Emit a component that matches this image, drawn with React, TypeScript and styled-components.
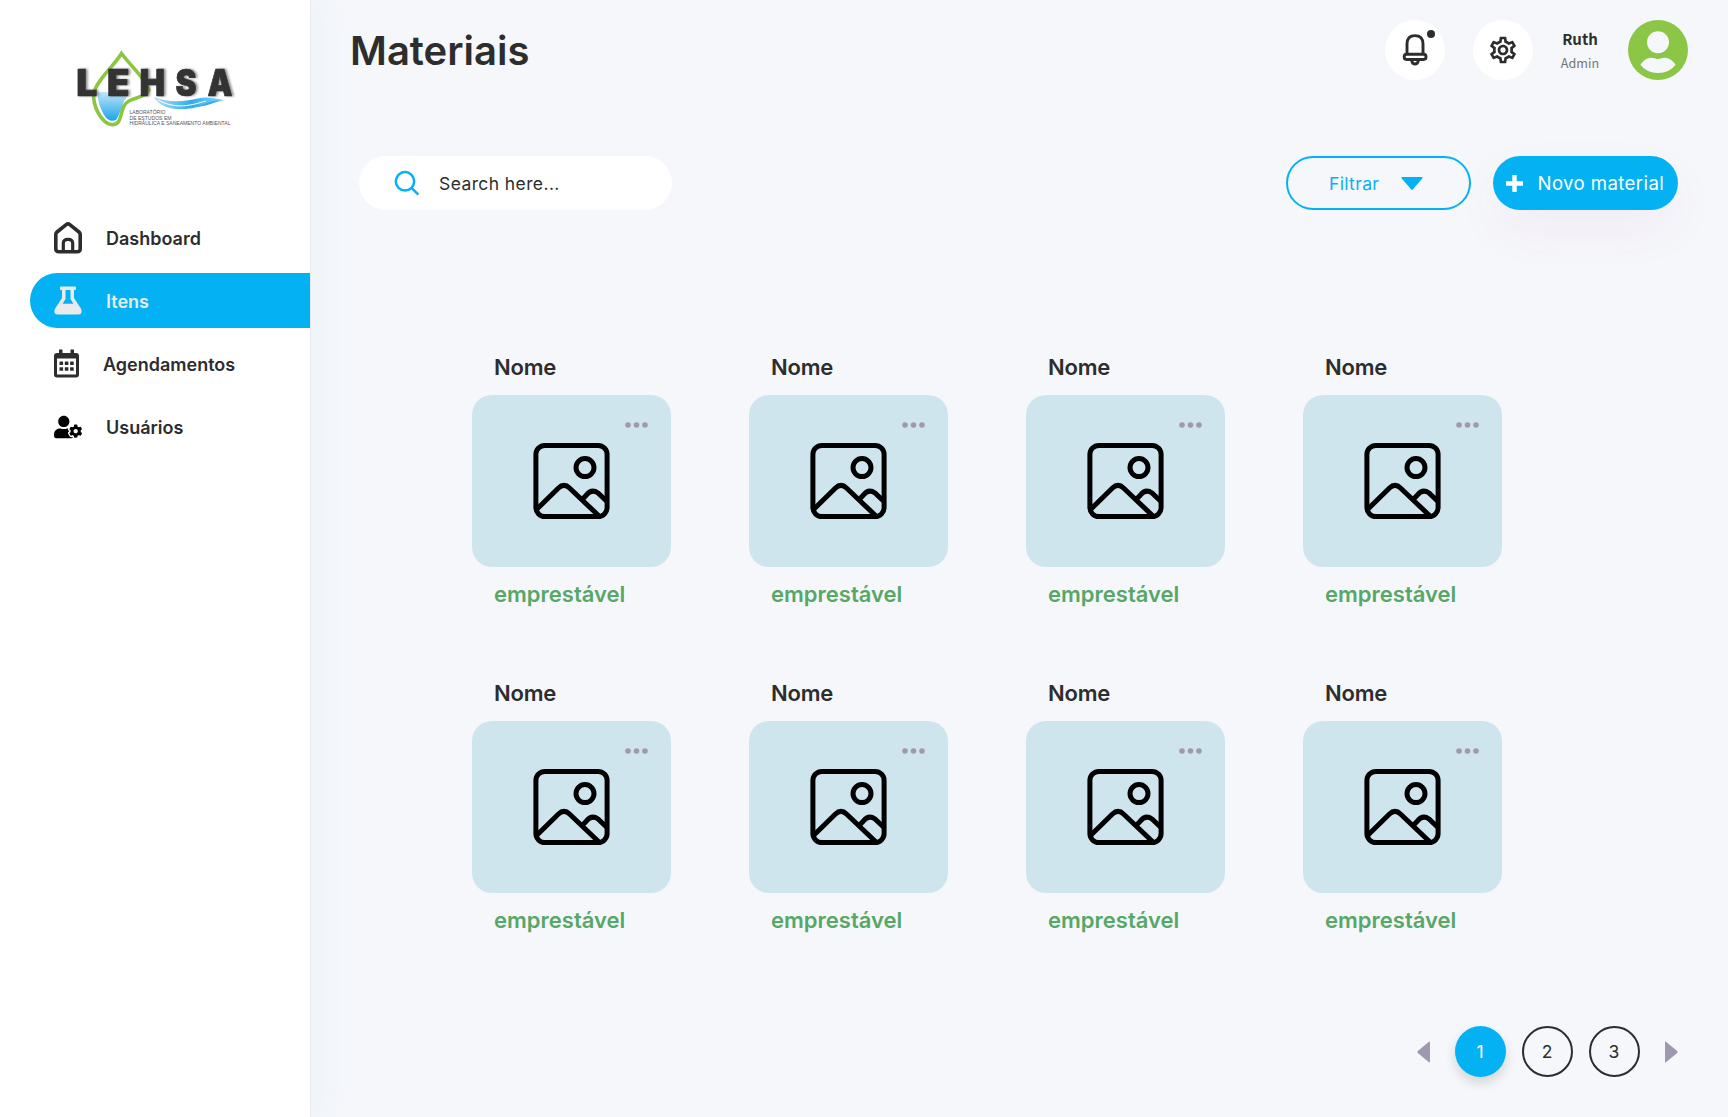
import React from "react";
import styled, { createGlobalStyle, css } from "styled-components";
import { FaUserCog } from "react-icons/fa";
import { MdOutlineSettings } from "react-icons/md";

const blue = "#04b2f3";
const ink = "#2d2d2e";
const mauve = "#a098ae";

const GlobalStyle = createGlobalStyle`
  *, *::before, *::after { box-sizing: border-box; }
  body { margin: 0; background: #f5f7fb; font-family: Inter, "Liberation Sans", sans-serif; color: ${ink}; }
  button { font: inherit; color: inherit; background: none; border: 0; padding: 0; }
  svg { display: block; flex: none; overflow: visible; }
`;

const Shell = styled.div`
  display: flex;
  width: 1728px;
  height: 1117px;
  overflow: hidden;
`;

const Sidebar = styled.aside`
  width: 310px;
  flex: none;
  background: #fff;
  padding: 40px 0 0;
  box-shadow: 1px 0 0 #e6ebf1, 10px 0 30px rgba(225, 238, 246, 0.4);
`;

const LogoBox = styled.div`
  height: 100px;
  padding-left: 60px;
  margin-bottom: 70px;
`;

const Nav = styled.nav`
  display: flex;
  flex-direction: column;
  gap: 8px;
  padding-left: 30px;
`;

const NavItem = styled.a<{ $active?: boolean }>`
  display: flex;
  align-items: center;
  gap: 24px;
  height: 55px;
  padding: 2px 0 0 24px;
  border-radius: 28px 0 0 28px;
  font-size: 18px;
  font-weight: 600;
  color: ${(p) => (p.$active ? "#e9eaec" : ink)};
  background: ${(p) => (p.$active ? blue : "transparent")};

  svg {
    margin-bottom: 2px;
  }
`;

const Main = styled.main`
  flex: 1;
  display: flex;
  flex-direction: column;
`;

const Header = styled.header`
  display: flex;
  justify-content: space-between;
  align-items: center;
  height: 100px;
  padding: 0 40px 0 40px;
`;

const Title = styled.h1`
  margin: 2px 0 0;
  font-size: 40px;
  line-height: 48px;
  font-weight: 600;
`;

const HeaderTools = styled.div`
  display: flex;
  align-items: center;
`;

const RoundButton = styled.button`
  width: 60px;
  height: 60px;
  margin-right: 28px;
  border-radius: 50%;
  background: #fff;
  display: grid;
  place-items: center;
`;

const Person = styled.div`
  width: 38px;
  margin: 1px 29px 0 0;
  display: flex;
  flex-direction: column;
  align-items: center;
  font-family: "Noto Sans CJK JP", "Noto Sans", sans-serif;
  line-height: 24px;
`;

const PersonName = styled.span`
  font-size: 15px;
  font-weight: 700;
`;

const PersonRole = styled.span`
  font-size: 12.6px;
  color: #757575;
`;

const Toolbar = styled.div`
  display: flex;
  align-items: center;
  margin-top: 56px;
  padding: 0 50px 0 49px;
  height: 54px;
`;

const geometric = css`
  font-family: Inter, "Liberation Sans", sans-serif;
  font-weight: 400;
  font-size: 17.5px;
  white-space: nowrap;
`;

const Search = styled.div`
  display: flex;
  align-items: center;
  gap: 19px;
  width: 313px;
  height: 54px;
  padding-left: 35px;
  border-radius: 27px;
  background: #fff;
  margin-right: auto;
`;

const Label = styled.span<{ $track?: number; $size?: number }>`
  ${geometric}
  font-size: ${(p) => p.$size ?? 17.5}px;
  letter-spacing: ${(p) => p.$track ?? 0}px;
`;

const FilterButton = styled.button`
  display: flex;
  align-items: center;
  gap: 22px;
  width: 185px;
  height: 54px;
  padding-left: 41px;
  border: 2px solid ${blue};
  border-radius: 27px;
  color: ${blue};
  margin-right: 22px;
`;

const NewButton = styled.button`
  display: flex;
  align-items: center;
  gap: 15px;
  width: 185px;
  height: 54px;
  padding-left: 12.5px;
  border-radius: 27px;
  color: #fff;
  background: ${blue};
  box-shadow: 0 20px 50px rgba(191, 21, 108, 0.05);
`;

const Grid = styled.section`
  display: grid;
  grid-template-columns: repeat(4, 199px);
  column-gap: 78px;
  row-gap: 46px;
  margin: 140px 0 0 162px;
`;

const Card = styled.article`
  height: 280px;
  display: flex;
  flex-direction: column;
`;

const CardName = styled.h2`
  margin: 0 0 11px 22px;
  height: 34px;
  line-height: 34px;
  font-size: 22px;
  font-weight: 600;
  letter-spacing: -0.2px;
`;

const Thumb = styled.div`
  position: relative;
  height: 172px;
  border-radius: 20px;
  background: #cfe5ed;
  display: grid;
  place-items: center;
`;

const More = styled.button`
  position: absolute;
  top: 27px;
  right: 22.5px;
`;

const Status = styled.span`
  margin: 10px 0 0 22px;
  line-height: 34px;
  font-size: 22px;
  font-weight: 600;
  color: #57a767;
`;

const Pagination = styled.nav`
  display: flex;
  align-items: center;
  justify-content: flex-end;
  margin-top: 70px;
  padding-right: 50px;
  height: 51px;
`;

const Page = styled.button<{ $active?: boolean }>`
  width: 51px;
  height: 51px;
  margin-right: 16px;
  border-radius: 50%;
  ${geometric}
  ${(p) =>
    p.$active
      ? css`
          background: ${blue};
          color: #fff;
          box-shadow: 0 6px 12px rgba(0, 0, 0, 0.14);
        `
      : css`
          border: 2px solid ${ink};
        `}
`;

const LogoLetter = styled.text`
  font-family: Inter, "Liberation Sans", sans-serif;
  font-weight: 900;
  font-size: 36.5px;
  fill: #333334;
  stroke: #333334;
  stroke-width: 0.7px;
`;

const LogoWord = styled.g`
  filter: drop-shadow(2.5px 0.5px 0.8px rgba(60, 60, 60, 0.55));
`;

const letters: [string, number, number][] = [
  ["L", 16.3, 21],
  ["E", 47, 22.5],
  ["H", 79.6, 25.5],
  ["S", 115.5, 21],
  ["A", 147.5, 25],
];

const Logo = () => (
  <svg width="190" height="100" viewBox="0 0 190 100">
    <defs>
      <linearGradient id="water" x1="0" y1="0" x2="0" y2="1">
        <stop offset="0" stopColor="#c3e6f8" />
        <stop offset="1" stopColor="#1ba5ea" />
      </linearGradient>
      <linearGradient id="wave" x1="0" y1="0" x2="1" y2="0">
        <stop offset="0" stopColor="#b5e0f7" />
        <stop offset="0.5" stopColor="#2fadea" />
        <stop offset="1" stopColor="#9fd8f5" />
      </linearGradient>
    </defs>
    <path d="M37.5 53 Q44 50 51 54 T66 52 Q69 56 64 61 Q60 74 56 80 Q49 83 44 75 Q38 65 37.5 53Z" fill="url(#water)" />
    <path d="M61.5 13.5 C54 26 36 41 34 53 C32 66 42 83 51 84.5 C61 86 60 75 63.500 67 C68 56 84 60 89 50 C85 38 70 25 61.5 13.5Z" fill="none" stroke="#8cc640" strokeWidth="3.6" />
    <path d="M94 57 C112 64 126 61 140 58 C150 56 160 60 168 60 C150 60 142 69 123 69 C109 70 98 65 94 57Z" fill="url(#wave)" />
    <path d="M98 60 C116 70 132 65 146 61" fill="none" stroke="#fff" strokeWidth="1" />
    <path d="M135 66.5 C147 65 151 59 163 61 C154 61 149 67 135 66.5Z" fill="#2fadea" />
    <LogoWord>
      {letters.map(([char, x, width]) => (
        <LogoLetter key={char} x={x} y="55.6" textLength={width} lengthAdjust="spacingAndGlyphs">
          {char}
        </LogoLetter>
      ))}
    </LogoWord>
    <g fontFamily="Liberation Sans" fontSize="4.8" fill="#555">
      <text x="69.5" y="74" textLength="36" lengthAdjust="spacingAndGlyphs">LABORATÓRIO</text>
      <text x="69.5" y="79.5" textLength="42" lengthAdjust="spacingAndGlyphs">DE ESTUDOS EM</text>
      <text x="69.5" y="85.1" textLength="101" lengthAdjust="spacingAndGlyphs">HIDRÁULICA E SANEAMENTO AMBIENTAL</text>
    </g>
  </svg>
);

const HomeIcon = () => (
  <svg width="28" height="32" viewBox="0 0 28 32" fill="none" stroke={ink} strokeWidth="3.6" strokeLinejoin="round">
    <path d="M1.8 12.5 Q1.8 11 3 10 L12.2 2.6 Q14 1.2 15.8 2.6 L25 10 Q26.2 11 26.2 12.5 V26.7 Q26.2 29.7 23.2 29.7 H4.8 Q1.8 29.7 1.8 26.7Z" />
    <path d="M9.3 29 V21.3 Q9.3 17.3 14 17.3 Q18.7 17.3 18.7 21.3 V29" strokeWidth="3.2" />
  </svg>
);

const FlaskIcon = () => (
  <svg width="28" height="29" viewBox="0 0 28 29" fill="#e9eaec" fillRule="evenodd">
    <path d="M7 0.5 H21 Q22 0.5 22 1.5 V3 Q22 4 21 4 H20 V12 L27.2 23 Q29 28.5 24 28.5 H4 Q-1 28.5 .8 23 L8 12 V4 H7 Q6 4 6 3 V1.5 Q6 .5 7 .5Z M11.5 4 V13 L8.6 17.7 H19.4 L16.5 13 V4Z" />
  </svg>
);

const CalendarIcon = () => (
  <svg width="25" height="29" viewBox="0 0 25 29" fill={ink} fillRule="evenodd">
    <path d="M5 0.5 H8.5 V4 H16.5 V0.5 H20 V4 H22 Q25 4 25 7 V25.5 Q25 28.5 22 28.5 H3 Q0 28.5 0 25.5 V7 Q0 4 3 4 H5Z M3 9.5 V25.5 H22 V9.5Z" />
    {[5.5, 10.8, 16.1].map((x) =>
      [12.5, 18.2].map((y) => <rect key={`${x}-${y}`} x={x} y={y} width="3.6" height="3.6" rx="0.5" />)
    )}
  </svg>
);

const BellIcon = () => (
  <svg width="60" height="60" viewBox="0 0 60 60" fill="none" stroke={ink} strokeWidth="2.9">
    <path d="M22 34.5 V24 Q22 15.6 30 15.6 Q38 15.6 38 24 V34.5" />
    <rect x="19.2" y="34.3" width="21.8" height="5.2" rx="2.4" />
    <path d="M26.5 40 Q27.2 44 30 44 Q32.8 44 33.5 40" />
    <circle cx="46" cy="14" r="4" fill={ink} stroke="none" />
  </svg>
);

const Avatar = () => (
  <svg width="60" height="60" viewBox="0 0 60 60">
    <circle cx="30" cy="30" r="30" fill="#8cc646" />
    <g fill="#f5f7fb">
      <circle cx="30" cy="22.3" r="11" />
      <path d="M12.4 44.8 Q16 39 21.5 38 C25 37.4 27 39 30 39 S35 37.4 38.5 38 Q44 39 47.6 44.8 Q41.5 53 30 53 Q18.5 53 12.4 44.8Z" />
    </g>
  </svg>
);

const SearchIcon = () => (
  <svg width="26" height="26" viewBox="0 0 26 26" fill="none" stroke={blue} strokeWidth="2.5">
    <circle cx="11" cy="11.3" r="9.2" />
    <path d="M17.3 17.6 L24.3 24.6" />
  </svg>
);

const PictureIcon = () => (
  <svg width="77" height="77" viewBox="0 0 77 77" fill="none" stroke="#000" strokeWidth="5">
    <rect x="2.9" y="2.4" width="71.2" height="71.2" rx="9" />
    <circle cx="52" cy="24.6" r="9" />
    <path d="M3.5 66.5 L25.5 45 Q31 39.5 36.5 45 L66.5 73.5" />
    <path d="M49 56.5 L53 52.5 Q58.5 45.5 65 50 L74 58.5" />
  </svg>
);

const DotsIcon = () => (
  <svg width="24" height="6" viewBox="0 0 24 6" fill={mauve}>
    <circle cx="3" cy="3" r="2.8" />
    <circle cx="11.5" cy="3" r="2.8" />
    <circle cx="20" cy="3" r="2.8" />
  </svg>
);

const Arrow = styled.svg<{ $right?: boolean }>`
  width: 13px;
  height: 22px;
  fill: ${mauve};
  margin-right: ${(p) => (p.$right ? 0 : 25)}px;
  margin-left: ${(p) => (p.$right ? 9.5 : 0)}px;
  transform: ${(p) => (p.$right ? "scaleX(-1)" : "none")};
`;

const arrowPath = "M12 .7 Q13 .2 13 1.5 V20.5 Q13 21.8 12 21.3 L.8 12 Q0 11 .8 10Z";

export default function App() {
  return (
    <>
      <GlobalStyle />
      <Shell>
        <Sidebar>
          <LogoBox>
            <Logo />
          </LogoBox>
          <Nav>
            <NavItem>
              <HomeIcon />
              Dashboard
            </NavItem>
            <NavItem $active>
              <FlaskIcon />
              Itens
            </NavItem>
            <NavItem>
              <CalendarIcon />
              Agendamentos
            </NavItem>
            <NavItem>
              <FaUserCog size={28} color="#000" />
              Usuários
            </NavItem>
          </Nav>
        </Sidebar>
        <Main>
          <Header>
            <Title>Materiais</Title>
            <HeaderTools>
              <RoundButton aria-label="Notificações">
                <BellIcon />
              </RoundButton>
              <RoundButton aria-label="Configurações">
                <MdOutlineSettings size={32} color={ink} />
              </RoundButton>
              <Person>
                <PersonName>Ruth</PersonName>
                <PersonRole>Admin</PersonRole>
              </Person>
              <Avatar />
            </HeaderTools>
          </Header>
          <Toolbar>
            <Search>
              <SearchIcon />
              <Label $track={0.4}>Search here...</Label>
            </Search>
            <FilterButton>
              <Label $track={0.35}>Filtrar</Label>
              <svg width="22" height="13" viewBox="0 0 22 13" fill={blue}>
                <path d="M1.2 0 H20.8 Q22.5 .3 21.3 1.6 L12 12.2 Q11 13.2 10 12.2 L.7 1.6 Q-.5 .3 1.2 0Z" />
              </svg>
            </FilterButton>
            <NewButton>
              <svg width="17" height="17" viewBox="0 0 17 17" fill="#fff">
                <path d="M6.3 0 H10.7 V6.3 H17 V10.7 H10.7 V17 H6.3 V10.7 H0 V6.3 H6.3Z" />
              </svg>
              <Label $track={0.4} $size={18.6}>Novo material</Label>
            </NewButton>
          </Toolbar>
          <Grid>
            {Array.from({ length: 8 }, (_, i) => (
              <Card key={i}>
                <CardName>Nome</CardName>
                <Thumb>
                  <PictureIcon />
                  <More aria-label="Mais opções">
                    <DotsIcon />
                  </More>
                </Thumb>
                <Status>emprestável</Status>
              </Card>
            ))}
          </Grid>
          <Pagination>
            <Arrow viewBox="0 0 13 22">
              <path d={arrowPath} />
            </Arrow>
            <Page $active>1</Page>
            <Page>2</Page>
            <Page>3</Page>
            <Arrow $right viewBox="0 0 13 22">
              <path d={arrowPath} />
            </Arrow>
          </Pagination>
        </Main>
      </Shell>
    </>
  );
}
